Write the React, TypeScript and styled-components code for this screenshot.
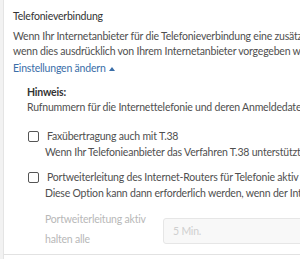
import React from "react";
import styled, { createGlobalStyle } from "styled-components";

const Global = createGlobalStyle`
  html, body { margin: 0; padding: 0; background: #f2f2f2; overflow: hidden; }
  body { font-family: Lato, "Open Sans", sans-serif; }
`;

const Panel = styled.div`
  margin-left: 3px;
  width: 700px;
  height: 259px;
  background: #ffffff;
  border-left: 1px solid #e4e4e4;
  box-sizing: border-box;
  padding: 9px 0 0 9px;
  font-size: 10.5px;
  letter-spacing: -0.2px;
  line-height: 15px;
  color: #4f4f4f;
`;

const Title = styled.div`
  color: #333;
`;

const Text = styled.p<{ $mt?: number }>`
  margin: ${(p) => p.$mt ?? 0}px 0 0;
  white-space: nowrap;
`;

const Link = styled.a`
  display: flex;
  align-items: center;
  gap: 3px;
  margin-top: 2px;
  color: #3a6ea8;
  text-decoration: none;
`;

const Caret = styled.span`
  width: 0;
  height: 0;
  border-left: 3.5px solid transparent;
  border-right: 3.5px solid transparent;
  border-bottom: 4px solid #3a6ea8;
`;

const Notice = styled.div<{ $mt: number }>`
  padding-left: 14px;
  margin-top: ${(p) => p.$mt}px;
`;

const NoticeHead = styled.div`
  color: #333;
  font-weight: 700;
`;

const OptionRow = styled.div<{ $mt: number }>`
  display: grid;
  grid-template-columns: 11px auto;
  column-gap: 8px;
  row-gap: 1px;
  margin-top: ${(p) => p.$mt}px;
  margin-left: 1px;
`;

const Box = styled.span`
  width: 11px;
  height: 11px;
  box-sizing: border-box;
  border: 1.5px solid #555;
  border-radius: 2px;
  align-self: center;
`;

const OptionLabel = styled.span`
  white-space: nowrap;
`;

const OptionHint = styled.span`
  grid-column: 2;
  margin-left: -2px;
  white-space: nowrap;
`;

const FieldRow = styled.div`
  display: flex;
  align-items: flex-start;
  margin: 8px 0 0 18px;
  gap: 8px;
`;

const FieldLabel = styled.div`
  width: 110px;
  line-height: 20px;
  color: #b8b8b8;
`;

const Input = styled.div`
  margin-top: 9px;
  width: 300px;
  height: 26px;
  box-sizing: border-box;
  border: 1px solid #e6e6e6;
  border-radius: 3px;
  background: #f8f8f8;
  color: #cfcfcf;
  padding-left: 9px;
  display: flex;
  align-items: center;
`;

const Rule = styled.div`
  margin: 5px 0 0 -9px;
  border-top: 1px solid #e2e2e2;
`;

export default function App() {
  return (
    <>
      <Global />
      <Panel>
        <Title>Telefonieverbindung</Title>
        <Text $mt={5}>
          Wenn Ihr Internetanbieter für die Telefonieverbindung eine zusätzliche VLAN-ID verwendet, aktivieren Sie diese Option nur,
        </Text>
        <Text>wenn dies ausdrücklich von Ihrem Internetanbieter vorgegeben wird.</Text>
        <Link href="#">
          Einstellungen ändern <Caret />
        </Link>
        <Notice $mt={9}>
          <NoticeHead>Hinweis:</NoticeHead>
          <Text>Rufnummern für die Internettelefonie und deren Anmeldedaten richten Sie unter „Telefonie“ ein.</Text>
        </Notice>
        <Notice $mt={0}>
          <OptionRow $mt={14}>
            <Box />
            <OptionLabel>Faxübertragung auch mit T.38</OptionLabel>
            <OptionHint>Wenn Ihr Telefonieanbieter das Verfahren T.38 unterstützt, aktivieren Sie diese Option.</OptionHint>
          </OptionRow>
          <OptionRow $mt={10}>
            <Box />
            <OptionLabel>Portweiterleitung des Internet-Routers für Telefonie aktiv halten</OptionLabel>
            <OptionHint>Diese Option kann dann erforderlich werden, wenn der Internet-Router vor der FRITZ!Box steht.</OptionHint>
          </OptionRow>
          <FieldRow>
            <FieldLabel>
              Portweiterleitung aktiv
              <br />
              halten alle
            </FieldLabel>
            <Input>5 Min.</Input>
          </FieldRow>
        </Notice>
        <Rule />
      </Panel>
    </>
  );
}
